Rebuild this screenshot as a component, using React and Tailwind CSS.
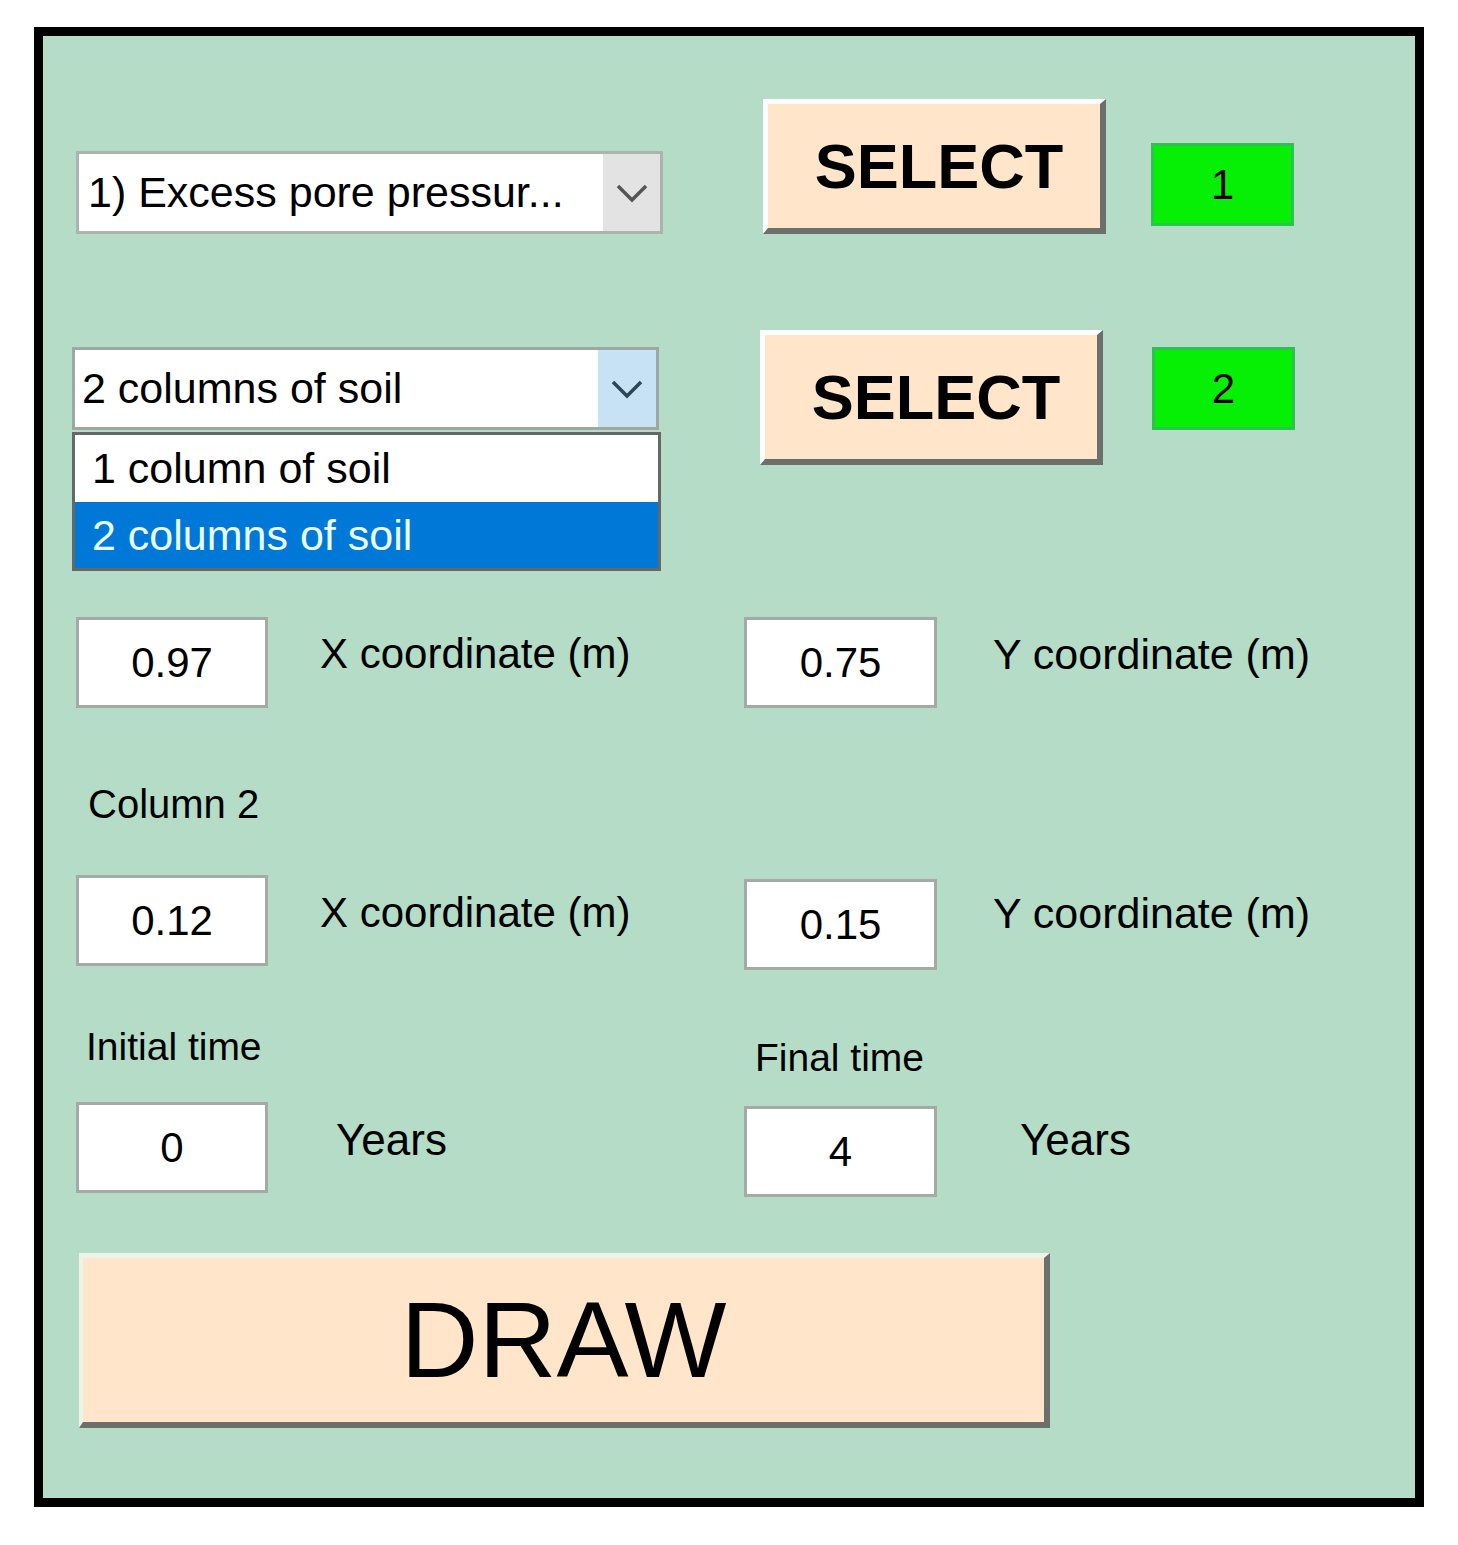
import React from 'react'

const Chevron = ({ color }) => (
  <svg width="32" height="20" viewBox="0 0 32 20" fill="none">
    <polyline points="2,3 16,17 30,3" stroke={color} strokeWidth="3.5" strokeLinejoin="miter" />
  </svg>
)

function NumBox({ value, className = '' }) {
  return (
    <div className={`w-[192px] h-[91px] bg-white border-[3px] border-[#a4aaa6] flex items-center justify-center text-[42px] leading-none text-black shrink-0 ${className}`}>
      {value}
    </div>
  )
}

function SelectButton({ className = '' }) {
  return (
    <button className={`w-[343px] h-[135px] shrink-0 bg-[#ffe6cb] border-t-[5px] border-l-[5px] border-b-[6px] border-r-[6px] border-t-white border-l-white border-b-[#6b706c] border-r-[#6b706c] flex items-center justify-center pl-[10px] text-[63px] font-bold text-black leading-none ${className}`}>
      SELECT
    </button>
  )
}

function GreenTag({ n, className = '' }) {
  return (
    <div className={`w-[143px] h-[83px] shrink-0 bg-[#06f006] border-[3px] border-[#2dc24e] flex items-center justify-center text-[42px] leading-none text-black ${className}`}>
      {n}
    </div>
  )
}

export default function App() {
  return (
    <div className="min-h-screen bg-white pt-[27px] pl-[34px] font-['Liberation_Sans',Arial,sans-serif]">
      <div className="w-[1390px] h-[1480px] border-[9px] border-black bg-[#b5dcc7]">

        {/* variable + select */}
        <div className="flex items-start pt-[63px]">
          <div className="ml-[33px] mt-[52px] w-[587px] h-[83px] shrink-0 bg-white border-[3px] border-[#adb3af] flex">
            <div className="flex-1 flex items-center pl-[9px] text-[43px] leading-none text-black whitespace-nowrap">1) Excess pore pressur...</div>
            <div className="w-[57px] bg-[#e3e3e3] flex items-center justify-center">
              <Chevron color="#555555" />
            </div>
          </div>
          <SelectButton className="ml-[100px]" />
          <GreenTag n="1" className="ml-[45px] mt-[44px]" />
        </div>

        {/* columns + select */}
        <div className="flex items-start mt-[96px]">
          <div className="relative ml-[29px] mt-[17px] w-[587px] h-[83px] shrink-0 bg-white border-[3px] border-[#9ea7a2] flex">
            <div className="flex-1 flex items-center pl-[7px] text-[43px] leading-none text-black whitespace-nowrap">2 columns of soil</div>
            <div className="w-[58px] bg-[#c7e2f5] flex items-center justify-center">
              <Chevron color="#2b4756" />
            </div>
            <div className="absolute left-[-3px] top-[82px] w-[589px] h-[139px] border-[3px] border-[#646866] bg-white flex flex-col z-10">
              <div className="h-[67px] flex items-center pl-[17px] text-[43px] leading-none text-black">1 column of soil</div>
              <div className="flex-1 flex items-center pl-[17px] text-[43px] leading-none text-[#eaffff] bg-[#0078d7]">2 columns of soil</div>
            </div>
          </div>
          <SelectButton className="ml-[101px] h-[134px] w-[342px]" />
          <GreenTag n="2" className="ml-[49px] mt-[17px]" />
        </div>

        {/* column 1 coordinates */}
        <div className="flex items-start mt-[152px]">
          <NumBox value="0.97" className="ml-[33px]" />
          <div className="ml-[52px] mt-[13px] w-[424px] shrink-0 text-[42px] leading-[48px] text-black">X coordinate (m)</div>
          <NumBox value="0.75" className="w-[193px]" />
          <div className="ml-[56px] mt-[13px] text-[43px] leading-[48px] text-black whitespace-nowrap">Y coordinate (m)</div>
        </div>

        <div className="mt-[72px] ml-[45px] text-[40px] leading-[48px] text-black">Column 2</div>

        {/* column 2 coordinates */}
        <div className="flex items-start mt-[47px]">
          <NumBox value="0.12" className="ml-[33px]" />
          <div className="ml-[52px] mt-[14px] w-[424px] shrink-0 text-[42px] leading-[48px] text-black">X coordinate (m)</div>
          <NumBox value="0.15" className="w-[193px] mt-[4px]" />
          <div className="ml-[56px] mt-[14px] text-[43px] leading-[48px] text-black whitespace-nowrap">Y coordinate (m)</div>
        </div>

        {/* times */}
        <div className="flex items-start mt-[53px]">
          <div className="ml-[43px] w-[669px] shrink-0 text-[39px] leading-[48px] text-black">Initial time</div>
          <div className="mt-[11px] text-[39px] leading-[48px] text-black">Final time</div>
        </div>

        <div className="flex items-start mt-[20px]">
          <NumBox value="0" className="ml-[33px]" />
          <div className="ml-[68px] mt-[14px] w-[408px] shrink-0 text-[44px] leading-[48px] text-black">Years</div>
          <NumBox value="4" className="w-[193px] mt-[4px]" />
          <div className="ml-[83px] mt-[14px] text-[44px] leading-[48px] text-black">Years</div>
        </div>

        <button className="mt-[56px] ml-[36px] w-[971px] h-[175px] bg-[#ffe6cb] border-t-[5px] border-l-[4px] border-b-[6px] border-r-[6px] border-t-[#eef3ea] border-l-[#eef3ea] border-b-[#6b706c] border-r-[#6b706c] flex items-center justify-center text-[108px] leading-none text-black">
          DRAW
        </button>
      </div>
    </div>
  )
}
